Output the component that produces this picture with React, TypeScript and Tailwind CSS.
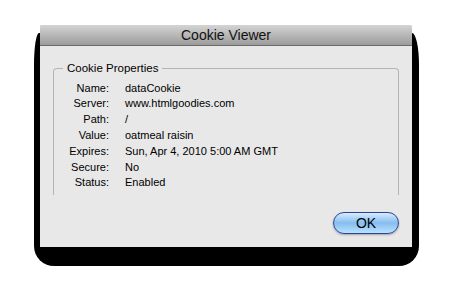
import type { FC } from 'react';

const rows: [string, string][] = [
  ['Name:', 'dataCookie'],
  ['Server:', 'www.htmlgoodies.com'],
  ['Path:', '/'],
  ['Value:', 'oatmeal raisin'],
  ['Expires:', 'Sun, Apr 4, 2010 5:00 AM GMT'],
  ['Secure:', 'No'],
  ['Status:', 'Enabled'],
];

const PropertyRow: FC<{ label: string; value: string }> = ({ label, value }) => (
  <div className="flex h-[15.8px] items-center">
    <span className="w-[55px] text-right">{label}</span>
    <span className="ml-[16px]">{value}</span>
  </div>
);

export default function App() {
  return (
    <div
      className="relative h-[301px] w-[453px] overflow-hidden bg-white text-black"
      style={{ fontFamily: '"Liberation Sans", Arial, sans-serif' }}
    >
      {/* drop shadow, flattened to black */}
      <div className="absolute left-[34px] top-[33px] h-[233px] w-[385px] rounded-b-[20px] rounded-tl-[5px_32px] rounded-tr-[7px_32px] bg-black" />

      <div className="absolute left-[40px] top-[25px] flex h-[222px] w-[372px] flex-col bg-[#e8e8e8]">
        <div className="flex h-[21px] items-center justify-center rounded-t-[2px] border-b border-[#6b6b6b] bg-gradient-to-b from-[#d4d4d4] to-[#9c9c9c] text-[14px] leading-none text-[#111]">
          Cookie Viewer
        </div>

        <div className="flex flex-1 flex-col px-[13px] pt-[22px]">
          <div className="relative h-[127px] w-[346px] rounded-t-[4px] border border-b-0 border-[#b4b4b4]">
            <span className="absolute -top-[8px] left-[9px] bg-[#e8e8e8] px-[4px] text-[11.5px] leading-[14px]">
              Cookie Properties
            </span>
            <div className="flex flex-col pt-[11px] text-[11px]">
              {rows.map(([label, value]) => (
                <PropertyRow key={label} label={label} value={value} />
              ))}
            </div>
          </div>

          <div className="mt-auto mb-[13px] flex justify-end">
            <button className="flex h-[22px] w-[66px] items-center justify-center rounded-full border border-[#2f4496] bg-gradient-to-b from-[#d6ebfd] via-[#86bdf0] to-[#b8e2ff] text-[14px] leading-none shadow-[0_1px_2px_rgba(0,0,0,0.3)]">
              OK
            </button>
          </div>
        </div>
      </div>
    </div>
  );
}
